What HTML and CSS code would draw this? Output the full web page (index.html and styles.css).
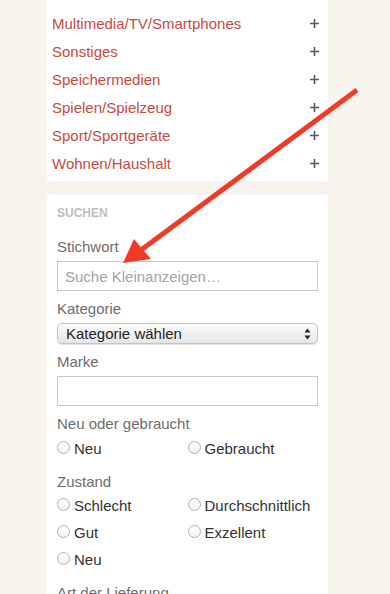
FILE: index.html
```
<html>
<head>
    <link rel="stylesheet" href="styles.css">
</head>
<body>

<div class="sidebar">

<div class="card categories">
    <div class="cat-row partial"><a href="#">Musikinstrumente</a><span class="plus"><svg width="9" height="9" viewBox="0 0 9 9"><path d="M4.5 0v9M0 4.5h9" stroke="#5a5a5a" stroke-width="1.6"/></svg></span></div>
    <div class="cat-row"><a href="#">Multimedia/TV/Smartphones</a><span class="plus"><svg width="9" height="9" viewBox="0 0 9 9"><path d="M4.5 0v9M0 4.5h9" stroke="#5a5a5a" stroke-width="1.6"/></svg></span></div>
    <div class="cat-row"><a href="#">Sonstiges</a><span class="plus"><svg width="9" height="9" viewBox="0 0 9 9"><path d="M4.5 0v9M0 4.5h9" stroke="#5a5a5a" stroke-width="1.6"/></svg></span></div>
    <div class="cat-row"><a href="#">Speichermedien</a><span class="plus"><svg width="9" height="9" viewBox="0 0 9 9"><path d="M4.5 0v9M0 4.5h9" stroke="#5a5a5a" stroke-width="1.6"/></svg></span></div>
    <div class="cat-row"><a href="#">Spielen/Spielzeug</a><span class="plus"><svg width="9" height="9" viewBox="0 0 9 9"><path d="M4.5 0v9M0 4.5h9" stroke="#5a5a5a" stroke-width="1.6"/></svg></span></div>
    <div class="cat-row"><a href="#">Sport/Sportgeräte</a><span class="plus"><svg width="9" height="9" viewBox="0 0 9 9"><path d="M4.5 0v9M0 4.5h9" stroke="#5a5a5a" stroke-width="1.6"/></svg></span></div>
    <div class="cat-row"><a href="#">Wohnen/Haushalt</a><span class="plus"><svg width="9" height="9" viewBox="0 0 9 9"><path d="M4.5 0v9M0 4.5h9" stroke="#5a5a5a" stroke-width="1.6"/></svg></span></div>
</div>

<div class="card search">
    <div class="search-title">SUCHEN</div>

    <div class="field first">
        <div class="label">Stichwort</div>
        <input class="text-input" type="text" placeholder="Suche Kleinanzeigen…">
    </div>

    <div class="field">
        <div class="label">Kategorie</div>
        <div class="select-wrap">
            <select class="select"><option>Kategorie wählen</option></select>
            <span class="select-arrows"><svg width="7" height="12" viewBox="0 0 7 12"><path d="M3.5 0.5L6.5 4.5H0.5Z M3.5 11.5L6.5 7.5H0.5Z" fill="#222"/></svg></span>
        </div>
    </div>

    <div class="field">
        <div class="label">Marke</div>
        <input class="text-input" type="text">
    </div>

    <div class="field">
        <div class="label">Neu oder gebraucht</div>
        <div class="radios">
            <label class="radio"><input type="radio" name="ng"> Neu</label>
            <label class="radio"><input type="radio" name="ng"> Gebraucht</label>
        </div>
    </div>

    <div class="field radio-field">
        <div class="label">Zustand</div>
        <div class="radios">
            <label class="radio"><input type="radio" name="zs"> Schlecht</label>
            <label class="radio"><input type="radio" name="zs"> Durchschnittlich</label>
            <label class="radio"><input type="radio" name="zs"> Gut</label>
            <label class="radio"><input type="radio" name="zs"> Exzellent</label>
            <label class="radio"><input type="radio" name="zs"> Neu</label>
        </div>
    </div>

    <div class="field radio-field">
        <div class="label">Art der Lieferung</div>
        <div class="radios">
            <label class="radio"><input type="radio" name="ld"> Abholung</label>
            <label class="radio"><input type="radio" name="ld"> Versand</label>
        </div>
    </div>
</div>

</div>

<svg class="annotation" width="390" height="594" viewBox="0 0 390 594">
    <line x1="357" y1="90" x2="141" y2="250" stroke="#f33a26" stroke-width="5"/>
    <polygon points="123,263 134,239 151,259" fill="#f33a26"/>
</svg>

</body>
</html>
```

FILE: styles.css
```
body { margin: 0; background: #f7f4ee; font-family: "Liberation Sans", Arial, sans-serif; font-size: 15px; overflow: hidden; }
.sidebar { width: 281px; margin: -23px 0 0 47px; }
.card { background: #fff; border-radius: 3px; }

.categories { padding: 4px 0 4px 0; margin-bottom: 14px; }
.cat-row { display: flex; justify-content: space-between; align-items: center; height: 28px; padding: 0 9px 0 5px; }
.cat-row.partial { height: 22px; margin-bottom: 6px; }
.cat-row a { color: #c94a3e; text-decoration: none; }
.plus { display: flex; }

.search { padding: 10px 10px 20px 10px; }
.search-title { font-size: 12px; font-weight: bold; color: #bdbdbd; line-height: 16px; }
.field { margin-top: 8px; }
.field.first { margin-top: 16px; }
.field.radio-field { margin-top: 10px; }
.label { color: #6e6e6e; line-height: 20px; margin-bottom: 4px; }
.radio-field .label, .radios { margin-bottom: 0; }

.text-input { display: block; box-sizing: border-box; width: 100%; height: 30px; border: 1px solid #c9c9c9; border-radius: 0; padding: 0 7px; font-family: inherit; font-size: 15px; color: #333; outline: none; }
.text-input::placeholder { color: #a3a3a3; }

.select-wrap { position: relative; }
.select { display: block; box-sizing: border-box; width: 100%; height: 21px; -webkit-appearance: none; appearance: none; border: 1px solid #c4c4c4; border-radius: 5px; background: linear-gradient(#fdfdfd, #f0f0f0 50%, #e6e6e6); box-shadow: 0 1px 1px rgba(0,0,0,0.12); padding: 0 0 0 8px; font-family: inherit; font-size: 15px; color: #222; line-height: 19px; }
.select-arrows { position: absolute; right: 7px; top: 5px; display: flex; pointer-events: none; }

.radios { display: grid; grid-template-columns: 1fr 1fr; }
.radio { display: flex; align-items: center; height: 27px; color: #333; }
.radio input { -webkit-appearance: none; appearance: none; box-sizing: border-box; width: 13px; height: 13px; margin: 0 4px 3px 0; border: 1px solid #b0b0b0; border-radius: 50%; background: linear-gradient(#fff, #f1f1f1); }
.field:nth-child(5) .label { margin-bottom: 1px; }

.annotation { position: absolute; top: 0; left: 0; pointer-events: none; }
```
